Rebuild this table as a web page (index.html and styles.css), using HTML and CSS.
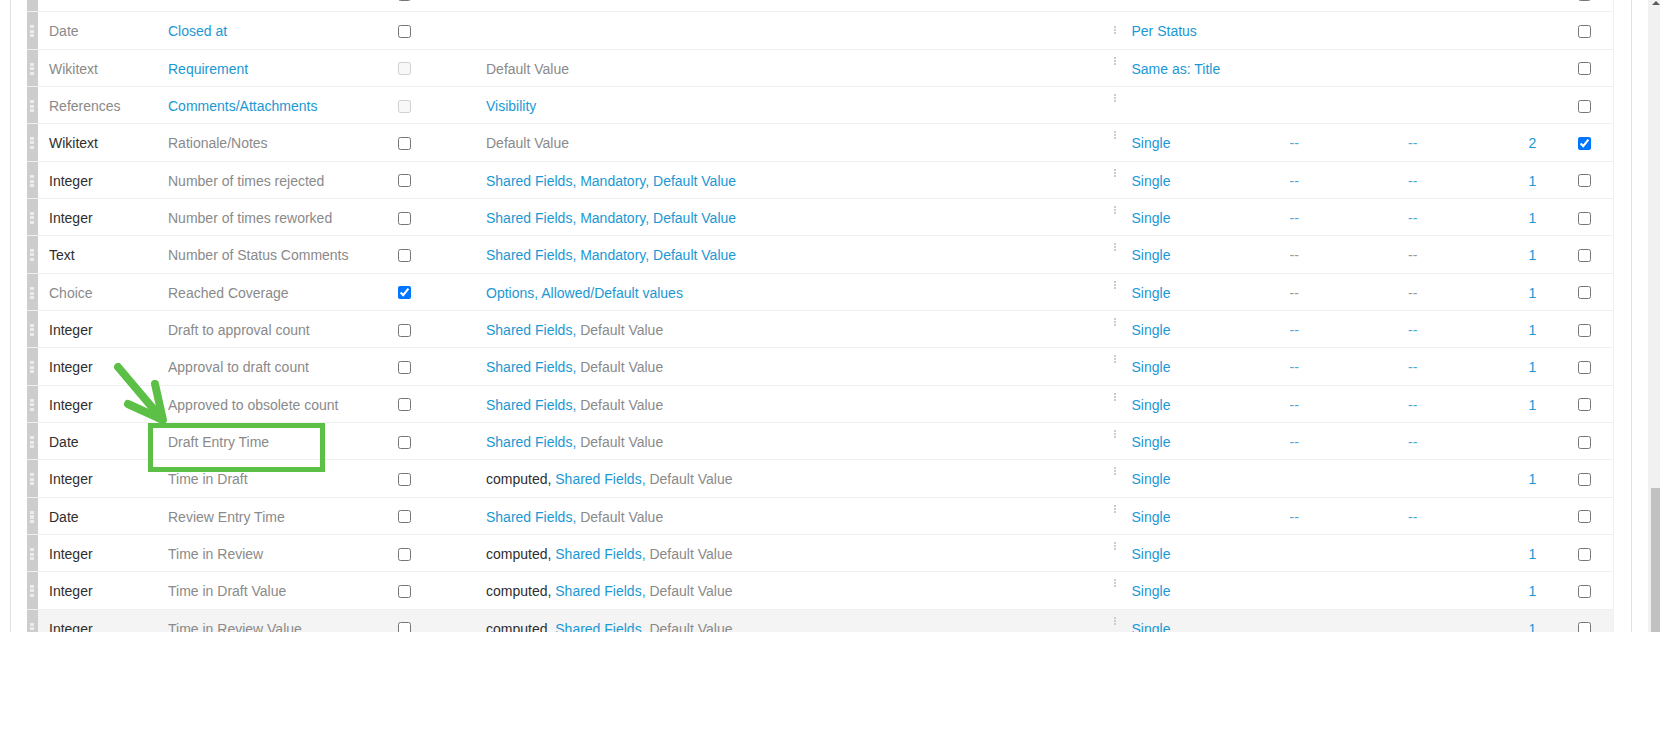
FILE: index.html
```html
<!DOCTYPE html>
<html>
<head>
<meta charset="utf-8">
<link rel="stylesheet" href="styles.css">
</head>
<body>
<div class="screen">
  <div class="panel">
    <div class="table">
      <div class="row">
        <div class="handle"><span class="grip"></span></div>
        <div class="cell type muted">Date</div>
        <div class="cell muted">Modified at</div>
        <div class="cell"><input type="checkbox" class="cb"></div>
        <div class="cell muted">Default Value</div>
        <div class="cell"><span class="vdots"></span></div>
        <div class="cell link">Per Status</div>
        <div class="cell"></div><div class="cell"></div><div class="cell"></div>
        <div class="cell"><input type="checkbox" class="cb"></div>
      </div>
      <div class="row">
        <div class="handle"><span class="grip"></span></div>
        <div class="cell type muted">Date</div>
        <div class="cell link">Closed at</div>
        <div class="cell"><input type="checkbox" class="cb"></div>
        <div class="cell"></div>
        <div class="cell"><span class="vdots first"></span></div>
        <div class="cell link">Per Status</div>
        <div class="cell"></div><div class="cell"></div><div class="cell"></div>
        <div class="cell"><input type="checkbox" class="cb"></div>
      </div>
      <div class="row">
        <div class="handle"><span class="grip"></span></div>
        <div class="cell type muted">Wikitext</div>
        <div class="cell link">Requirement</div>
        <div class="cell"><input type="checkbox" class="cb" disabled></div>
        <div class="cell muted">Default Value</div>
        <div class="cell"><span class="vdots"></span></div>
        <div class="cell link">Same as: Title</div>
        <div class="cell"></div><div class="cell"></div><div class="cell"></div>
        <div class="cell"><input type="checkbox" class="cb"></div>
      </div>
      <div class="row">
        <div class="handle"><span class="grip"></span></div>
        <div class="cell type muted">References</div>
        <div class="cell link">Comments/Attachments</div>
        <div class="cell"><input type="checkbox" class="cb" disabled></div>
        <div class="cell link">Visibility</div>
        <div class="cell"><span class="vdots"></span></div>
        <div class="cell"></div>
        <div class="cell"></div><div class="cell"></div><div class="cell"></div>
        <div class="cell"><input type="checkbox" class="cb"></div>
      </div>
      <div class="row">
        <div class="handle"><span class="grip"></span></div>
        <div class="cell type dark">Wikitext</div>
        <div class="cell muted">Rationale/Notes</div>
        <div class="cell"><input type="checkbox" class="cb"></div>
        <div class="cell muted">Default Value</div>
        <div class="cell"><span class="vdots"></span></div>
        <div class="cell link">Single</div>
        <div class="cell dash">--</div><div class="cell dash">--</div><div class="cell link">2</div>
        <div class="cell"><input type="checkbox" class="cb" checked></div>
      </div>
      <div class="row">
        <div class="handle"><span class="grip"></span></div>
        <div class="cell type dark">Integer</div>
        <div class="cell muted">Number of times rejected</div>
        <div class="cell"><input type="checkbox" class="cb"></div>
        <div class="cell link">Shared Fields, Mandatory, Default Value</div>
        <div class="cell"><span class="vdots"></span></div>
        <div class="cell link">Single</div>
        <div class="cell dash">--</div><div class="cell dash">--</div><div class="cell link">1</div>
        <div class="cell"><input type="checkbox" class="cb"></div>
      </div>
      <div class="row">
        <div class="handle"><span class="grip"></span></div>
        <div class="cell type dark">Integer</div>
        <div class="cell muted">Number of times reworked</div>
        <div class="cell"><input type="checkbox" class="cb"></div>
        <div class="cell link">Shared Fields, Mandatory, Default Value</div>
        <div class="cell"><span class="vdots"></span></div>
        <div class="cell link">Single</div>
        <div class="cell dash">--</div><div class="cell dash">--</div><div class="cell link">1</div>
        <div class="cell"><input type="checkbox" class="cb"></div>
      </div>
      <div class="row">
        <div class="handle"><span class="grip"></span></div>
        <div class="cell type dark">Text</div>
        <div class="cell muted">Number of Status Comments</div>
        <div class="cell"><input type="checkbox" class="cb"></div>
        <div class="cell link">Shared Fields, Mandatory, Default Value</div>
        <div class="cell"><span class="vdots"></span></div>
        <div class="cell link">Single</div>
        <div class="cell dash grey">--</div><div class="cell dash grey">--</div><div class="cell link">1</div>
        <div class="cell"><input type="checkbox" class="cb"></div>
      </div>
      <div class="row">
        <div class="handle"><span class="grip"></span></div>
        <div class="cell type muted">Choice</div>
        <div class="cell muted">Reached Coverage</div>
        <div class="cell"><input type="checkbox" class="cb" checked></div>
        <div class="cell link">Options, Allowed/Default values</div>
        <div class="cell"><span class="vdots"></span></div>
        <div class="cell link">Single</div>
        <div class="cell dash grey">--</div><div class="cell dash grey">--</div><div class="cell link">1</div>
        <div class="cell"><input type="checkbox" class="cb"></div>
      </div>
      <div class="row">
        <div class="handle"><span class="grip"></span></div>
        <div class="cell type dark">Integer</div>
        <div class="cell muted">Draft to approval count</div>
        <div class="cell"><input type="checkbox" class="cb"></div>
        <div class="cell"><span class="link">Shared Fields,</span>&nbsp;<span class="muted">Default Value</span></div>
        <div class="cell"><span class="vdots"></span></div>
        <div class="cell link">Single</div>
        <div class="cell dash">--</div><div class="cell dash">--</div><div class="cell link">1</div>
        <div class="cell"><input type="checkbox" class="cb"></div>
      </div>
      <div class="row">
        <div class="handle"><span class="grip"></span></div>
        <div class="cell type dark">Integer</div>
        <div class="cell muted">Approval to draft count</div>
        <div class="cell"><input type="checkbox" class="cb"></div>
        <div class="cell"><span class="link">Shared Fields,</span>&nbsp;<span class="muted">Default Value</span></div>
        <div class="cell"><span class="vdots"></span></div>
        <div class="cell link">Single</div>
        <div class="cell dash">--</div><div class="cell dash">--</div><div class="cell link">1</div>
        <div class="cell"><input type="checkbox" class="cb"></div>
      </div>
      <div class="row">
        <div class="handle"><span class="grip"></span></div>
        <div class="cell type dark">Integer</div>
        <div class="cell muted">Approved to obsolete count</div>
        <div class="cell"><input type="checkbox" class="cb"></div>
        <div class="cell"><span class="link">Shared Fields,</span>&nbsp;<span class="muted">Default Value</span></div>
        <div class="cell"><span class="vdots"></span></div>
        <div class="cell link">Single</div>
        <div class="cell dash">--</div><div class="cell dash">--</div><div class="cell link">1</div>
        <div class="cell"><input type="checkbox" class="cb"></div>
      </div>
      <div class="row">
        <div class="handle"><span class="grip"></span></div>
        <div class="cell type dark">Date</div>
        <div class="cell muted">Draft Entry Time</div>
        <div class="cell"><input type="checkbox" class="cb"></div>
        <div class="cell"><span class="link">Shared Fields,</span>&nbsp;<span class="muted">Default Value</span></div>
        <div class="cell"><span class="vdots"></span></div>
        <div class="cell link">Single</div>
        <div class="cell dash">--</div><div class="cell dash">--</div><div class="cell"></div>
        <div class="cell"><input type="checkbox" class="cb"></div>
      </div>
      <div class="row">
        <div class="handle"><span class="grip"></span></div>
        <div class="cell type dark">Integer</div>
        <div class="cell muted">Time in Draft</div>
        <div class="cell"><input type="checkbox" class="cb"></div>
        <div class="cell"><span class="dark">computed,</span>&nbsp;<span class="link">Shared Fields,</span>&nbsp;<span class="muted">Default Value</span></div>
        <div class="cell"><span class="vdots"></span></div>
        <div class="cell link">Single</div>
        <div class="cell"></div><div class="cell"></div><div class="cell link">1</div>
        <div class="cell"><input type="checkbox" class="cb"></div>
      </div>
      <div class="row">
        <div class="handle"><span class="grip"></span></div>
        <div class="cell type dark">Date</div>
        <div class="cell muted">Review Entry Time</div>
        <div class="cell"><input type="checkbox" class="cb"></div>
        <div class="cell"><span class="link">Shared Fields,</span>&nbsp;<span class="muted">Default Value</span></div>
        <div class="cell"><span class="vdots"></span></div>
        <div class="cell link">Single</div>
        <div class="cell dash">--</div><div class="cell dash">--</div><div class="cell"></div>
        <div class="cell"><input type="checkbox" class="cb"></div>
      </div>
      <div class="row">
        <div class="handle"><span class="grip"></span></div>
        <div class="cell type dark">Integer</div>
        <div class="cell muted">Time in Review</div>
        <div class="cell"><input type="checkbox" class="cb"></div>
        <div class="cell"><span class="dark">computed,</span>&nbsp;<span class="link">Shared Fields,</span>&nbsp;<span class="muted">Default Value</span></div>
        <div class="cell"><span class="vdots"></span></div>
        <div class="cell link">Single</div>
        <div class="cell"></div><div class="cell"></div><div class="cell link">1</div>
        <div class="cell"><input type="checkbox" class="cb"></div>
      </div>
      <div class="row">
        <div class="handle"><span class="grip"></span></div>
        <div class="cell type dark">Integer</div>
        <div class="cell muted">Time in Draft Value</div>
        <div class="cell"><input type="checkbox" class="cb"></div>
        <div class="cell"><span class="dark">computed,</span>&nbsp;<span class="link">Shared Fields,</span>&nbsp;<span class="muted">Default Value</span></div>
        <div class="cell"><span class="vdots"></span></div>
        <div class="cell link">Single</div>
        <div class="cell"></div><div class="cell"></div><div class="cell link">1</div>
        <div class="cell"><input type="checkbox" class="cb"></div>
      </div>
      <div class="row hover">
        <div class="handle"><span class="grip"></span></div>
        <div class="cell type dark">Integer</div>
        <div class="cell muted">Time in Review Value</div>
        <div class="cell"><input type="checkbox" class="cb"></div>
        <div class="cell"><span class="dark">computed,</span>&nbsp;<span class="link">Shared Fields,</span>&nbsp;<span class="muted">Default Value</span></div>
        <div class="cell"><span class="vdots"></span></div>
        <div class="cell link">Single</div>
        <div class="cell"></div><div class="cell"></div><div class="cell link">1</div>
        <div class="cell"><input type="checkbox" class="cb"></div>
      </div>
    </div>
  </div>
  <div class="gap"></div>
  <div class="scrollbar">
    <span class="arrow-up"></span>
    <span class="thumb"></span>
  </div>

  <svg class="annot-arrow" width="70" height="80" viewBox="0 0 70 80">
    <polyline points="4,4 48,56" fill="none" stroke="#5cbf46" stroke-width="8" stroke-linecap="round"/>
    <polyline points="14,41 49,57 41,21" fill="none" stroke="#5cbf46" stroke-width="8" stroke-linecap="round" stroke-linejoin="round"/>
  </svg>
  <div class="annot-box"></div>
</div>
</body>
</html>
```

FILE: styles.css
```css
html, body {
  margin: 0;
  padding: 0;
  background: #ffffff;
}
body {
  font-family: "Liberation Sans", Arial, sans-serif;
  font-size: 14px;
  color: #333333;
}
.screen {
  position: relative;
  display: flex;
  height: 632px;
  overflow: hidden;
}
.panel {
  margin-left: 10px;
  width: 1622px;
  flex: none;
  box-sizing: border-box;
  border-left: 1px solid #e2e2e2;
  border-right: 1px solid #e2e2e2;
  padding-left: 16px;
  overflow: hidden;
}
.table {
  margin-top: -25px;
  width: 1587px;
  box-sizing: border-box;
  border-right: 1px solid #f0f0f0;
}
.row {
  display: grid;
  grid-template-columns: 11px 130px 230px 88px 627.5px 18px 158px 118.5px 120.5px 49px 35.5px;
  align-items: center;
  height: 37.33px;
  box-sizing: border-box;
  border-bottom: 1px solid #efefef;
}
.row.hover {
  background: #f4f4f4;
}
.handle {
  align-self: stretch;
  background: #cdcdcd;
  display: flex;
  align-items: center;
}
.grip {
  display: block;
  margin-left: 3px;
  margin-top: 2px;
  width: 4px;
  height: 12px;
  background: repeating-linear-gradient(to bottom, #ececec 0 3px, transparent 3px 4.5px);
}
.cell {
  white-space: nowrap;
  padding-top: 2px;
  line-height: 16px;
}
.cell.type {
  padding-left: 11px;
}
.dark { color: #2e2e2e; }
.muted { color: #8a8a8a; }
.link { color: #1b98d4; }
.dash { color: #4aa8dc; }
.dash.grey { color: #9a9a9a; }
.cb {
  display: block;
  margin: 0;
  width: 13px;
  height: 13px;
}
.vdots {
  display: block;
  width: 2px;
  height: 8px;
  margin-top: -12px;
  background: repeating-linear-gradient(to bottom, #cccccc 0 2px, transparent 2px 3px);
}
.vdots.first {
  margin-top: -2px;
}
.gap {
  width: 16px;
  flex: none;
}
.scrollbar {
  width: 12px;
  flex: none;
  background: #f1f1f1;
  display: flex;
  flex-direction: column;
  align-items: flex-end;
}
.arrow-up {
  display: block;
  width: 0;
  height: 0;
  margin-top: 1px;
  border-left: 4px solid transparent;
  border-right: 4px solid transparent;
  border-bottom: 4px solid #5a5a5a;
}
.thumb {
  display: block;
  width: 9px;
  margin-top: 483px;
  flex: 1;
  background: #c1c1c1;
}
.annot-arrow {
  position: absolute;
  left: 114px;
  top: 363px;
}
.annot-box {
  position: absolute;
  left: 148px;
  top: 423px;
  width: 177px;
  height: 49px;
  box-sizing: border-box;
  border: 5.5px solid #5cbf46;
}
```
